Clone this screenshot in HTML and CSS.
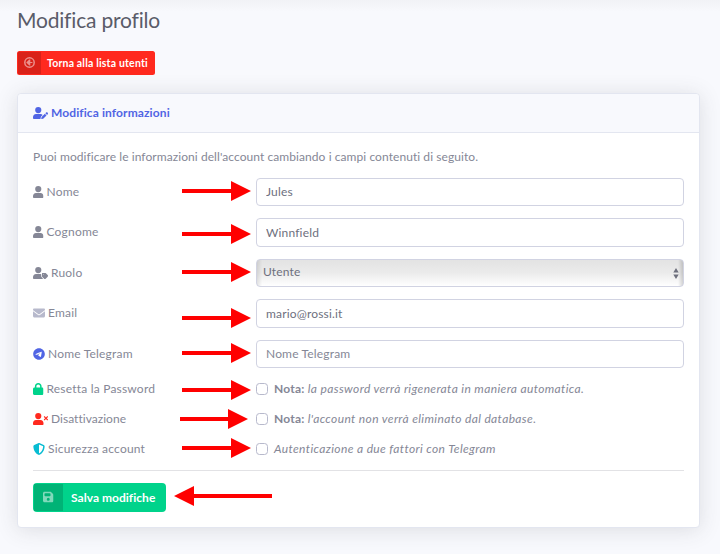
FILE: index.html
```html
<!DOCTYPE html>
<html lang="it">
<head>
<meta charset="utf-8">
<title>Modifica profilo</title>
<link rel="stylesheet" href="styles.css">
</head>
<body>
<svg class="defs" aria-hidden="true">
  <symbol id="user" viewBox="0 0 448 512"><path d="M224 264A132 132 0 1 0 224 0a132 132 0 1 0 0 264zM0 432C0 360 50 300 130 300H318C398 300 448 360 448 432V478C448 498 434 512 414 512H34C14 512 0 498 0 478z"/></symbol>
  <symbol id="user-edit" viewBox="0 0 640 512"><path d="M224 264A132 132 0 1 0 224 0a132 132 0 1 0 0 264zM0 432C0 360 50 300 130 300H318C358 300 390 314 412 337L354 394C345 402 340 412 337 422L322 479C319 490 320 502 325 512H34C14 512 0 498 0 478zM613.800 235.700c-15.600-15.600-40.900-15.600-56.600 0l-29.400 29.400 71 71 29.400-29.400c15.600-15.600 15.600-40.900 0-56.600l-14.400-14.400zM375.900 417c-4.100 4.100-7 9.200-8.400 14.900l-15 60.100c-1.400 5.500 .2 11.200 4.200 15.200s9.700 5.600 15.200 4.200l60.100-15c5.600-1.400 10.800-4.300 14.900-8.400L576.100 358.700l-71-71L375.900 417z"/></symbol>
  <symbol id="user-tag" viewBox="0 0 640 512"><path d="M224 264A132 132 0 1 0 224 0a132 132 0 1 0 0 264zM0 432C0 360 50 300 130 300H318L352 304V381C352 402 360 421 375 436L432 508C428 511 423 512 418 512H34C14 512 0 498 0 478zM384 272v118c0 13 5 25 14 34l74 74c19 19 49 19 68 0l86-86c19-19 19-49 0-68l-74-74c-9-9-21-14-34-14H400c-9 0-16 7-16 16zm64 64a16 16 0 1 1 0-32 16 16 0 1 1 0 32z"/></symbol>
  <symbol id="user-times" viewBox="0 0 640 512"><path d="M224 264A132 132 0 1 0 224 0a132 132 0 1 0 0 264zM0 432C0 360 50 300 130 300H318C398 300 448 360 448 432V478C448 498 434 512 414 512H34C14 512 0 498 0 478zM471 143c-9 9-9 25 0 34l47 47-47 47c-9 9-9 25 0 34s25 9 34 0l47-47 47 47c9 9 25 9 34 0s9-25 0-34l-47-47 47-47c9-9 9-25 0-34s-25-9-34 0l-47 47-47-47c-9-9-25-9-34 0z"/></symbol>
  <symbol id="envelope" viewBox="0 0 512 512"><path d="M48 64C21.500 64 0 85.500 0 112c0 15.100 7.100 29.300 19.200 38.400L236.800 313.600c11.400 8.500 27 8.500 38.400 0L492.800 150.400c12.100-9.100 19.200-23.300 19.200-38.400c0-26.500-21.500-48-48-48H48zM0 176V384c0 35.300 28.700 64 64 64H448c35.300 0 64-28.700 64-64V176L294.400 339.200c-22.800 17.100-54 17.100-76.800 0L0 176z"/></symbol>
  <symbol id="telegram" viewBox="0 0 496 512"><path d="M248 8C111.033 8 0 119.033 0 256S111.033 504 248 504 496 392.967 496 256 384.967 8 248 8ZM362.952 176.660c-3.732 39.215-19.881 134.378-28.100 178.300-3.476 18.584-10.322 24.816-16.948 25.425-14.400 1.326-25.338-9.517-39.287-18.661-21.827-14.308-34.158-23.215-55.346-37.177-24.485-16.135-8.612-25 5.342-39.500 3.652-3.793 67.107-61.510 68.335-66.746.153-.655.300-3.100-1.154-4.384s-3.590-.849-5.135-.500q-3.283.746-104.608 69.142-14.845 10.194-26.894 9.934c-8.855-.191-25.888-5.006-38.551-9.123-15.531-5.048-27.875-7.717-26.800-16.291q.840-6.700 18.450-13.700 108.446-47.248 144.628-62.300c68.872-28.647 83.183-33.623 92.511-33.789 2.052-.034 6.639.474 9.610 2.885a10.452 10.452 0 0 1 3.530 6.716A43.765 43.765 0 0 1 362.952 176.660Z"/></symbol>
  <symbol id="lock" viewBox="0 0 448 512"><path d="M144 144v48H304V144c0-44.200-35.800-80-80-80s-80 35.800-80 80zM80 192V144C80 64.500 144.500 0 224 0s144 64.500 144 144v48h16c35.300 0 64 28.700 64 64V448c0 35.300-28.700 64-64 64H64c-35.300 0-64-28.700-64-64V256c0-35.300 28.700-64 64-64H80z"/></symbol>
  <symbol id="shield" viewBox="0 0 512 512"><path d="M256 0c4.600 0 9.200 1 13.400 2.900L457.700 82.800c22 9.300 38.400 31 38.300 57.200c-.5 99.200-41.300 280.700-213.600 363.200c-16.700 8-36.100 8-52.800 0C57.300 420.700 16.500 239.200 16 140c-.1-26.200 16.300-47.900 38.300-57.200L242.700 2.900C246.800 1 251.400 0 256 0zm0 66.800V444.800C394 378 431.100 230.100 432 141.400L256 66.800z"/></symbol>
  <symbol id="arrow-left" viewBox="0 0 11 11"><circle cx="5.500" cy="5.500" r="4.700" fill="none" stroke="currentColor" stroke-width="1.500"/><path d="M2.200 5.500L5.300 2.600H6.300V5H8.400V6H6.300V8.400H5.300z"/></symbol>
  <symbol id="save" viewBox="0 0 448 512"><path d="M64 32C28.700 32 0 60.700 0 96V416c0 35.300 28.700 64 64 64H384c35.300 0 64-28.700 64-64V173.300c0-17-6.700-33.300-18.700-45.300L352 50.700C340 38.700 323.700 32 306.700 32H64zm0 96c0-17.700 14.300-32 32-32H288c17.700 0 32 14.300 32 32v64c0 17.700-14.300 32-32 32H96c-17.700 0-32-14.300-32-32V128zM224 288a64 64 0 1 1 0 128 64 64 0 1 1 0-128z"/></symbol>
</svg>

<main class="page">
  <h1 class="title">Modifica profilo</h1>
  <a class="btn btn-danger"><span class="btn-icon"><svg class="ic w-512"><use href="#arrow-left"/></svg></span><span class="btn-text">Torna alla lista utenti</span></a>

  <section class="card">
    <header class="card-header"><svg class="ic w-640"><use href="#user-edit"/></svg><span>Modifica informazioni</span></header>
    <form class="card-body">
      <p class="intro">Puoi modificare le informazioni dell'account cambiando i campi contenuti di seguito.</p>
      <div class="fields">
        <div class="row"><label class="label"><svg class="ic w-448"><use href="#user"/></svg><span>Nome</span></label><input class="control" type="text" value="Jules"></div>
        <div class="row"><label class="label"><svg class="ic w-448"><use href="#user"/></svg><span>Cognome</span></label><input class="control" type="text" value="Winnfield"></div>
        <div class="row"><label class="label"><svg class="ic w-640"><use href="#user-tag"/></svg><span>Ruolo</span></label>
          <div class="select-wrap"><select class="control select"><option>Utente</option></select><svg class="caret" viewBox="0 0 6 11"><path d="M3 0L5.700 4.400H.3zM3 11L.3 6.600H5.700z"/></svg></div></div>
        <div class="row"><label class="label"><svg class="ic w-512 muted"><use href="#envelope"/></svg><span>Email</span></label><input class="control" type="text" value="mario@rossi.it"></div>
        <div class="row"><label class="label"><svg class="ic w-512 primary"><use href="#telegram"/></svg><span>Nome Telegram</span></label><input class="control" type="text" placeholder="Nome Telegram"></div>
      </div>
      <div class="checks">
        <div class="row"><label class="label"><svg class="ic w-448 success"><use href="#lock"/></svg><span>Resetta la Password</span></label><label class="check"><input type="checkbox"><span><b>Nota:</b> <i>la password verrà rigenerata in maniera automatica.</i></span></label></div>
        <div class="row"><label class="label label-tight"><svg class="ic w-640 danger"><use href="#user-times"/></svg><span>Disattivazione</span></label><label class="check"><input type="checkbox"><span><b>Nota:</b> <i>l'account non verrà eliminato dal database.</i></span></label></div>
        <div class="row"><label class="label"><svg class="ic w-512 info"><use href="#shield"/></svg><span>Sicurezza account</span></label><label class="check"><input type="checkbox"><span><i>Autenticazione a due fattori con Telegram</i></span></label></div>
      </div>
      <hr class="rule">
      <button class="btn btn-success" type="button"><span class="btn-icon"><svg class="ic w-448"><use href="#save"/></svg></span><span class="btn-text">Salva modifiche</span></button>
    </form>
  </section>
</main>

<svg class="arrows" viewBox="0 0 720 554" aria-hidden="true">
  <path d="M182 189h49v-8l20 10-20 10v-8h-49z"/>
  <path d="M182 232h49v-8l20 10-20 10v-8h-49z"/>
  <path d="M182 270h49v-8l20 10-20 10v-8h-49z"/>
  <path d="M182 316h49v-8l20 10-20 10v-8h-49z"/>
  <path d="M182 351h49v-8l20 10-20 10v-8h-49z"/>
  <path d="M182 388h49v-8l20 10-20 10v-8h-49z"/>
  <path d="M180 417h48v-8l20 10-20 10v-8h-48z"/>
  <path d="M182 446h49v-8l20 10-20 10v-8h-49z"/>
  <path d="M272 494h-78v-8l-20 10 20 10v-8h78z"/>
</svg>
</body>
</html>
```

FILE: styles.css
```css
* { box-sizing: border-box; }
body {
  margin: 0;
  height: 554px;
  overflow: hidden;
  background: linear-gradient(#f1f2f6, #f8f9fd 12px);
  color: #858796;
  font: 12px/18px Lato, "Open Sans", sans-serif;
  letter-spacing: .2px;
}
.defs { display: none; }
.page { padding: 7px 20px 0 17px; display: flex; flex-direction: column; align-items: flex-start; }
.title { margin: 0 0 18px; font-size: 21px; line-height: 26px; font-weight: 400; color: #5a5c69; letter-spacing: -.19px; }

.ic { height: 12px; flex: none; fill: currentColor; }
.w-448 { width: 10.5px; }
.w-512 { width: 12px; }
.w-640 { width: 15px; }
.primary { color: #5165e4; }
.success { color: #00d38b; }
.danger { color: #ff291e; }
.info { color: #08bcd2; }
.muted { color: #b7b9cc; }

.btn { display: inline-flex; align-items: stretch; padding: 1px; border: 0; color: #fff; font-family: inherit; font-weight: 700; }
.btn-icon { display: flex; align-items: center; justify-content: center; background: rgba(0, 0, 0, .15); color: rgba(255, 255, 255, .5); }
.btn-text { display: flex; align-items: center; flex: 1; white-space: nowrap; }
.btn-danger { width: 138px; height: 24px; border-radius: 2.500px; background: #ff291e; font-size: 10.500px; letter-spacing: .18px; }
.btn-danger .btn-icon { width: 23px; }
.btn-danger .btn-icon .ic { width: 11px; height: 11px; margin-bottom: 1px; }
.btn-danger .btn-text { padding-left: 6px; padding-bottom: 1px; }
.btn-success { width: 133px; height: 29px; border-radius: 4px; background: #00d38b; font-size: 12px; letter-spacing: .03px; }
.btn-success .btn-icon { width: 29px; }
.btn-success .btn-text { padding-left: 8px; }

.card {
  width: 683px;
  height: 435px;
  margin-top: 18px;
  border: 1px solid #e3e6f0;
  border-radius: 4px;
  background: #fff;
  box-shadow: 0 2px 21px rgba(58, 59, 69, .15);
}
.card-header {
  display: flex;
  align-items: center;
  gap: 3px;
  height: 39px;
  padding: 0 15px;
  border-bottom: 1px solid #e3e6f0;
  border-radius: 4px 4px 0 0;
  background: #f8f9fd;
  color: #5165e4;
  font-weight: 700;
  letter-spacing: .1px;
}
.card-body { padding: 15px 15px 0; }
.intro { margin: 0 0 11.700px; letter-spacing: .07px; }
.fields { display: flex; flex-direction: column; gap: 12.120px; }
.row { display: grid; grid-template-columns: 223px 428px; align-items: center; }
.label { display: flex; align-items: center; gap: 3px; }
.label-tight { letter-spacing: .03px; }
.control {
  width: 100%;
  height: 28.400px;
  padding: 0 9px;
  border: 1px solid #d1d3e2;
  border-radius: 4px;
  background: #fff;
  color: #6e707e;
  font: inherit;
  letter-spacing: .17px;
}
.control::placeholder { color: #858796; opacity: 1; }
.select-wrap { position: relative; height: 28.400px; }
.select {
  appearance: none;
  display: block;
  padding: 0 6px 1px;
  background:
    linear-gradient(90deg, rgba(0, 0, 0, .1), transparent 5px calc(100% - 5px), rgba(0, 0, 0, .16)),
    linear-gradient(#e3e3e3, #ebebeb 50%, #fff);
}
.caret { position: absolute; right: 5px; top: 9px; width: 6px; height: 11px; fill: #6e707e; }

.checks { display: flex; flex-direction: column; margin-top: 5.900px; }
.checks .row { height: 30px; }
.check { display: flex; align-items: center; gap: 6px; white-space: nowrap; }
.check i { letter-spacing: .37px; }
.check input { appearance: none; width: 12px; height: 12px; margin: 0; border: 1px solid #b7b9cc; border-radius: 3.500px; background: #fff; }
.rule { margin: 6px 0 12px; border: 0; border-top: 1px solid #e2e2e5; }

.arrows { position: absolute; left: 0; top: 0; width: 720px; height: 554px; fill: #f00; pointer-events: none; }
```
